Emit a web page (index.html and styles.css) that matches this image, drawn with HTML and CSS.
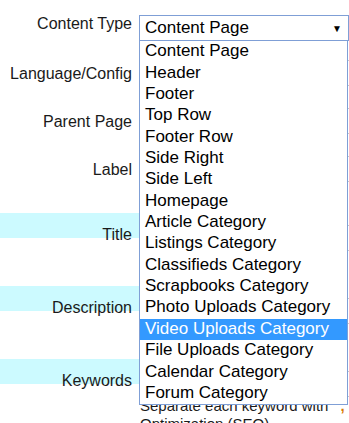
FILE: index.html
```html
<!DOCTYPE html>
<html lang="en">
<head>
  <meta charset="UTF-8" />
  <title>Edit Page</title>
  <link rel="stylesheet" href="styles.css">
</head>
<body>
  <div class="form">
    <div class="row row-type">
      <div class="label">Content Type</div>
      <div class="field">
        <div class="select">
          <span>Content Page</span>
          <span class="arrow">&#9660;</span>
        </div>
      </div>
    </div>
    <div class="row">
      <div class="label">Language/Config</div>
      <div class="field"><div class="input"></div></div>
    </div>
    <div class="row">
      <div class="label">Parent Page</div>
      <div class="field"><div class="input"></div></div>
    </div>
    <div class="row row-tall">
      <div class="label">Label</div>
      <div class="field"><div class="input"></div></div>
    </div>
    <div class="row row-band">
      <div class="label band">Title</div>
      <div class="field"><div class="input"></div></div>
    </div>
    <div class="row row-band">
      <div class="label band">Description</div>
      <div class="field"><div class="input"></div></div>
    </div>
    <div class="row row-band row-last">
      <div class="label band">Keywords</div>
      <div class="field">
        <div class="input"></div>
        <div class="hint">Separate each keyword with <span class="mark">,</span><br>Optimization (SEO)</div>
      </div>
    </div>

    <ul class="dropdown">
      <li>Content Page</li>
      <li>Header</li>
      <li>Footer</li>
      <li>Top Row</li>
      <li>Footer Row</li>
      <li>Side Right</li>
      <li>Side Left</li>
      <li>Homepage</li>
      <li>Article Category</li>
      <li>Listings Category</li>
      <li>Classifieds Category</li>
      <li>Scrapbooks Category</li>
      <li>Photo Uploads Category</li>
      <li class="selected">Video Uploads Category</li>
      <li>File Uploads Category</li>
      <li>Calendar Category</li>
      <li>Forum Category</li>
    </ul>
  </div>
</body>
</html>
```

FILE: styles.css
```css
body {
  margin: 0;
  background: #fff;
  font-family: 'Liberation Sans', Arial, sans-serif;
  color: #1a1a1a;
  overflow: hidden;
}
.form {
  position: relative;
  width: 349px;
  height: 423px;
  overflow: hidden;
}
.row {
  display: grid;
  grid-template-columns: 139px 1fr;
  height: 48px;
}
.row-tall {
  height: 69px;
}
.row-band {
  height: 73px;
}
.row-last {
  height: 80px;
}
.label {
  font-size: 16px;
  line-height: 18px;
  text-align: right;
  padding: 17px 7px 0 0;
}
.row-type .label {
  padding-top: 15px;
}
.band {
  padding-top: 13px;
  background: linear-gradient(#ccfaff, #ccfaff) no-repeat 0 0 / 100% 25px;
}
.field {
  min-width: 0;
}
.select {
  margin-top: 15px;
  height: 24px;
  border: 1px solid #7f9fd6;
  display: flex;
  align-items: center;
  justify-content: space-between;
  padding: 0 6px 0 5px;
  font-size: 17px;
  color: #000;
}
.arrow {
  font-size: 10px;
  padding-top: 1px;
}
.input {
  margin-top: 12px;
  height: 24px;
  border: 1px solid #c8c8c8;
  border-right: none;
}
.hint {
  padding-left: 1px;
  font-size: 15px;
  line-height: 18px;
  white-space: nowrap;
  color: #1a1a1a;
}
.mark {
  color: #d97a00;
  font-weight: bold;
  padding-left: 8px;
}
.dropdown {
  position: absolute;
  left: 139px;
  top: 40px;
  width: 207px;
  height: 363px;
  margin: 0;
  padding: 0;
  list-style: none;
  background: #fff;
  border: 1px solid #7f9fd6;
  display: flex;
  flex-direction: column;
}
.dropdown li {
  flex: 1 1 0;
  min-height: 0;
  display: flex;
  align-items: center;
  padding: 0 0 2px 5px;
  font-size: 17px;
  line-height: 19px;
  color: #000;
  white-space: nowrap;
}
.dropdown .selected {
  background: #3399ff;
  color: #fff;
}
```
